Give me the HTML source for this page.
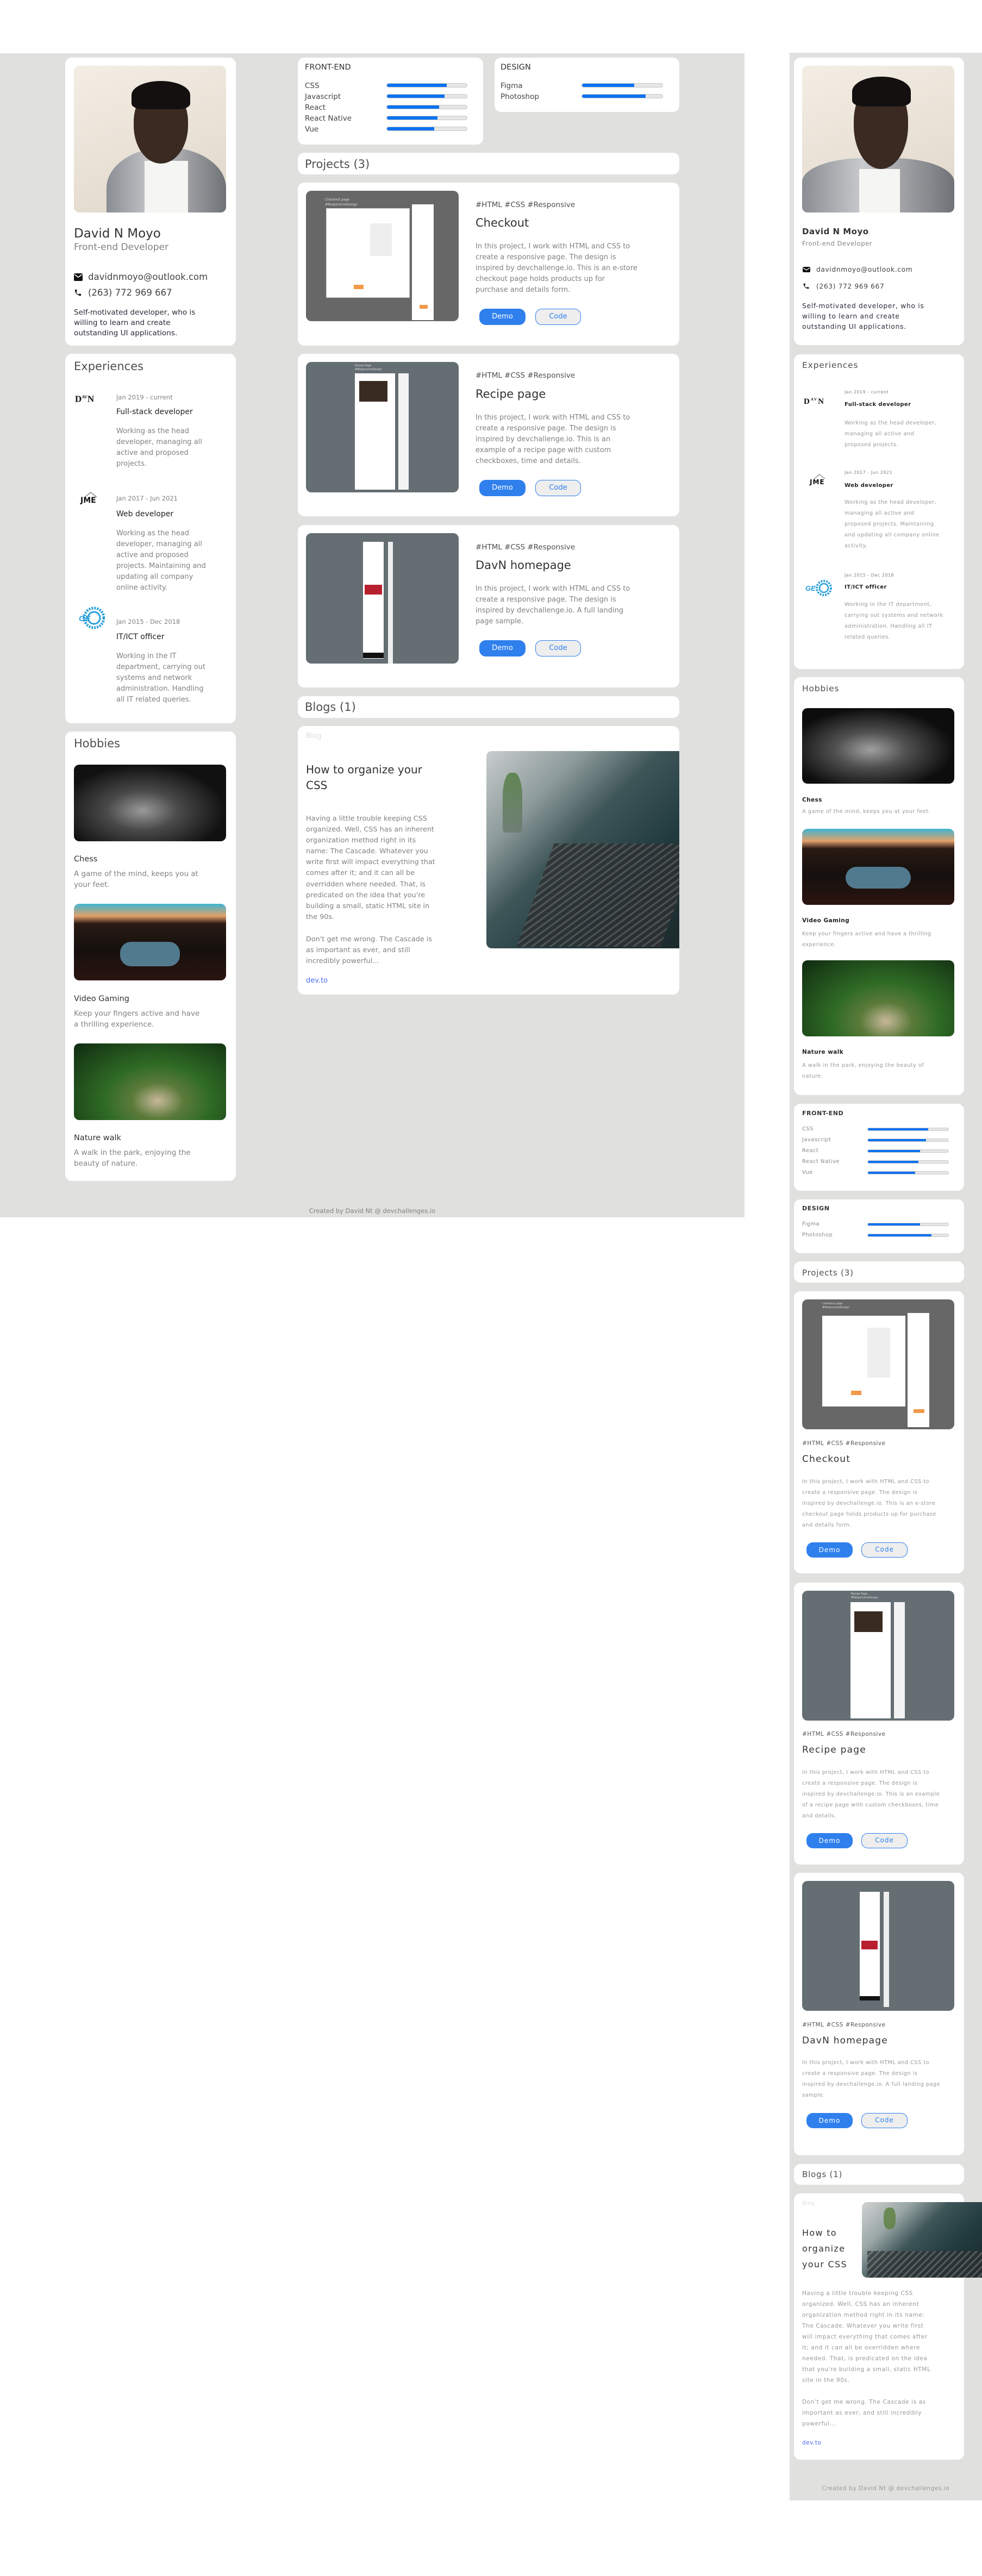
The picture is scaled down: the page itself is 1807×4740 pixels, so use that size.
<!DOCTYPE html>
<html><head><meta charset="utf-8"><style>
*{margin:0;padding:0;box-sizing:border-box}
body{width:1807px;height:4740px;position:relative;background:#fff;font-family:"DejaVu Sans","Liberation Sans",sans-serif;color:#333;overflow:hidden}
.a{position:absolute;white-space:nowrap}
.bg{position:absolute;background:#e0e0df}
.c{position:absolute;background:#fff;border-radius:12px}
.g{color:#828282}
.bar{position:absolute;background:#e6e6e6;border:1px solid #c9c9c9;border-radius:6px;overflow:hidden}
.bar i{display:block;height:100%;background:#0b72f0;border-radius:6px 0 0 6px}
.demo{position:absolute;background:#2f80ed;color:#fff;border-radius:12px;text-align:center}
.code{position:absolute;background:#eee;color:#2f80ed;border:1.5px solid #2f80ed;border-radius:12px;text-align:center}
.img{position:absolute;border-radius:10px;overflow:hidden}
</style></head><body>

<!-- ================= DESKTOP ================= -->
<div class="bg" style="left:0;top:98px;width:1370px;height:2142px"></div>

<!-- profile card -->
<div class="c" style="left:120px;top:106px;width:314px;height:530px"></div>
<div class="img" style="left:136px;top:121px;width:280px;height:270px;background:linear-gradient(160deg,#f3ede4 0%,#e8e0d4 60%,#ddd5c8 100%)">
  <div style="position:absolute;left:60px;top:150px;width:220px;height:150px;border-radius:50% 50% 0 0;background:linear-gradient(90deg,#8a8d92,#c8cacd 40%,#9a9ca0 70%,#6f7276)"></div>
  <div style="position:absolute;left:130px;top:175px;width:80px;height:100px;background:#f5f5f3"></div>
  <div style="position:absolute;left:110px;top:40px;width:100px;height:140px;border-radius:45% 45% 50% 50%;background:#3a2a22"></div>
  <div style="position:absolute;left:106px;top:28px;width:108px;height:52px;border-radius:50% 50% 20% 20%;background:#141010"></div>
</div>
<div class="a" style="left:136px;top:416px;font-size:23px;line-height:28px;color:#333">David N Moyo</div>
<div class="a g" style="left:136px;top:444px;font-size:17px;line-height:22px">Front-end Developer</div>
<svg class="a" style="left:136px;top:503px" width="16" height="14" viewBox="0 0 16 14"><rect x="0" y="0" width="16" height="14" rx="2" fill="#111"/><path d="M1 2 L8 7 L15 2" stroke="#fff" stroke-width="1.6" fill="none"/></svg>
<div class="a" style="left:162px;top:499px;font-size:16.5px;line-height:22px;color:#444">davidnmoyo@outlook.com</div>
<svg class="a" style="left:136px;top:531px" width="15" height="15" viewBox="0 0 24 24"><path d="M6.6 10.8c1.4 2.8 3.8 5.1 6.6 6.6l2.2-2.2c.3-.3.7-.4 1-.2 1.1.4 2.3.6 3.6.6.6 0 1 .4 1 1V20c0 .6-.4 1-1 1C10.6 21 3 13.4 3 4c0-.6.4-1 1-1h3.5c.6 0 1 .4 1 1 0 1.3.2 2.5.6 3.6.1.3 0 .7-.2 1L6.6 10.8z" fill="#111"/></svg>
<div class="a" style="left:162px;top:528px;font-size:16.5px;line-height:22px;color:#444">(263) 772 969 667</div>
<div class="a" style="left:136px;top:566px;font-size:13.6px;line-height:19px;color:#2b2b3a">Self-motivated developer, who is<br>willing to learn and create<br>outstanding UI applications.</div>

<!-- experiences -->
<div class="c" style="left:120px;top:651px;width:314px;height:680px"></div>
<div class="a" style="left:136px;top:661px;font-size:21px;line-height:26px;color:#4f4f4f">Experiences</div>
<div class="a" style="left:138px;top:722px;font-family:'Liberation Serif',serif;font-weight:bold;font-size:17px;line-height:18px;color:#111">D<sup style="font-size:8px">AV</sup>N</div>
<div class="a" style="left:214px;top:722px;font-size:11.5px;line-height:18px" class="g"><span style="color:#828282">Jan 2019 - current</span></div>
<div class="a" style="left:214px;top:749px;font-size:14px;line-height:18px;color:#222">Full-stack developer</div>
<div class="a" style="left:214px;top:784px;font-size:13px;line-height:20px;color:#828282">Working as the head<br>developer, managing all<br>active and proposed<br>projects.</div>

<div class="a" style="left:148px;top:904px;width:38px;height:30px">
  <svg width="38" height="12" viewBox="0 0 38 12" style="position:absolute;left:0;top:0"><path d="M8 11 L19 2 L30 11" stroke="#888" stroke-width="1.5" fill="none"/></svg>
  <div style="position:absolute;left:0;top:9px;font-weight:bold;font-size:14px;line-height:16px;color:#111">JME</div>
</div>
<div class="a" style="left:214px;top:908px;font-size:11.5px;line-height:18px;color:#828282">Jan 2017 - Jun 2021</div>
<div class="a" style="left:214px;top:937px;font-size:14px;line-height:18px;color:#222">Web developer</div>
<div class="a" style="left:214px;top:972px;font-size:13px;line-height:20px;color:#828282">Working as the head<br>developer, managing all<br>active and proposed<br>projects. Maintaining and<br>updating all company<br>online activity.</div>

<svg class="a" style="left:143px;top:1114px" width="50" height="46" viewBox="0 0 50 46"><circle cx="30" cy="23" r="18" fill="none" stroke="#2a9fd8" stroke-width="5" stroke-dasharray="3 2"/><circle cx="30" cy="23" r="11" fill="none" stroke="#2a9fd8" stroke-width="3"/><text x="2" y="29" font-family="Liberation Sans" font-weight="bold" font-style="italic" font-size="15" fill="#2a9fd8">GE</text></svg>
<div class="a" style="left:214px;top:1135px;font-size:11.5px;line-height:18px;color:#828282">Jan 2015 - Dec 2018</div>
<div class="a" style="left:214px;top:1163px;font-size:14px;line-height:18px;color:#222">IT/ICT officer</div>
<div class="a" style="left:214px;top:1198px;font-size:13px;line-height:20px;color:#828282">Working in the IT<br>department, carrying out<br>systems and network<br>administration. Handling<br>all IT related queries.</div>

<!-- hobbies -->
<div class="c" style="left:120px;top:1346px;width:314px;height:827px"></div>
<div class="a" style="left:136px;top:1355px;font-size:21px;line-height:26px;color:#4f4f4f">Hobbies</div>
<div class="img" style="left:136px;top:1407px;width:280px;height:141px;background:radial-gradient(ellipse at 45% 60%,#9a9a9a 0%,#4a4a4a 30%,#111 70%)"></div>
<div class="a" style="left:136px;top:1571px;font-size:14.5px;line-height:20px;color:#333">Chess</div>
<div class="a" style="left:136px;top:1598px;font-size:13.5px;line-height:20px;color:#828282">A game of the mind, keeps you at<br>your feet.</div>
<div class="img" style="left:136px;top:1663px;width:280px;height:141px;background:linear-gradient(180deg,#3fb6d2 0%,#e2a06a 16%,#2a1a14 26%,#15100e 60%,#2b1410 100%)"><div style="position:absolute;left:85px;top:70px;width:110px;height:45px;border-radius:20px;background:#6aa6c4;opacity:.7"></div></div>
<div class="a" style="left:136px;top:1828px;font-size:14.5px;line-height:20px;color:#333">Video Gaming</div>
<div class="a" style="left:136px;top:1855px;font-size:13.5px;line-height:20px;color:#828282">Keep your fingers active and have<br>a thrilling experience.</div>
<div class="img" style="left:136px;top:1920px;width:280px;height:141px;background:radial-gradient(ellipse at 55% 75%,#c8b89a 0%,#5b7a3a 22%,#2f6b25 45%,#0f2a10 100%)"></div>
<div class="a" style="left:136px;top:2084px;font-size:14.5px;line-height:20px;color:#333">Nature walk</div>
<div class="a" style="left:136px;top:2111px;font-size:13.5px;line-height:20px;color:#828282">A walk in the park, enjoying the<br>beauty of nature.</div>

<!-- skills -->
<div class="c" style="left:548px;top:106px;width:341px;height:160px"></div>
<div class="a" style="left:561px;top:115px;font-size:14.5px;line-height:18px;color:#333">FRONT-END</div>
<div class="a" style="left:561px;top:148px;font-size:13.5px;line-height:20px;color:#444">CSS<br>Javascript<br>React<br>React Native<br>Vue</div>
<div class="bar" style="left:711px;top:153px;width:149px;height:8px"><i style="width:75%"></i></div>
<div class="bar" style="left:711px;top:173px;width:149px;height:8px"><i style="width:72%"></i></div>
<div class="bar" style="left:711px;top:193px;width:149px;height:8px"><i style="width:65%"></i></div>
<div class="bar" style="left:711px;top:213px;width:149px;height:8px"><i style="width:63%"></i></div>
<div class="bar" style="left:711px;top:233px;width:149px;height:8px"><i style="width:59%"></i></div>

<div class="c" style="left:910px;top:106px;width:340px;height:100px"></div>
<div class="a" style="left:921px;top:115px;font-size:14.5px;line-height:18px;color:#333">DESIGN</div>
<div class="a" style="left:921px;top:148px;font-size:13.5px;line-height:20px;color:#444">Figma<br>Photoshop</div>
<div class="bar" style="left:1070px;top:153px;width:150px;height:8px"><i style="width:65%"></i></div>
<div class="bar" style="left:1070px;top:173px;width:150px;height:8px"><i style="width:79%"></i></div>

<!-- projects header -->
<div class="c" style="left:548px;top:281px;width:702px;height:40px"></div>
<div class="a" style="left:561px;top:288px;font-size:21px;line-height:28px;color:#4f4f4f">Projects (3)</div>

<!-- project 1 -->
<div class="c" style="left:548px;top:336px;width:702px;height:300px"></div>
<div class="img" style="left:563px;top:351px;width:281px;height:240px;background:#676767">
  <div style="position:absolute;left:35px;top:12px;font-size:6px;line-height:9px;color:#ddd">Checkout page<br>#ResponsiveDesign</div>
  <div style="position:absolute;left:37px;top:32px;width:154px;height:165px;background:#fff;border:1px solid #ccc"></div>
  <div style="position:absolute;left:118px;top:60px;width:40px;height:60px;background:#eee"></div>
  <div style="position:absolute;left:88px;top:173px;width:18px;height:8px;background:#f2994a"></div>
  <div style="position:absolute;left:195px;top:25px;width:40px;height:213px;background:#fff"></div>
  <div style="position:absolute;left:209px;top:210px;width:15px;height:7px;background:#f2994a"></div>
</div>
<div class="a" style="left:875px;top:367px;font-size:13.5px;line-height:20px;color:#4f4f4f">#HTML #CSS #Responsive</div>
<div class="a" style="left:875px;top:396px;font-size:21px;line-height:28px;color:#333">Checkout</div>
<div class="a" style="left:875px;top:444px;font-size:13px;line-height:20px;color:#828282">In this project, I work with HTML and CSS to<br>create a responsive page. The design is<br>inspired by devchallenge.io. This is an e-store<br>checkout page holds products up for<br>purchase and details form.</div>
<div class="demo" style="left:882px;top:568px;width:85px;height:30px;font-size:13px;line-height:30px">Demo</div>
<div class="code" style="left:985px;top:568px;width:84px;height:30px;font-size:13px;line-height:27px">Code</div>

<!-- project 2 -->
<div class="c" style="left:548px;top:651px;width:702px;height:299px"></div>
<div class="img" style="left:563px;top:666px;width:281px;height:240px;background:#646e73">
  <div style="position:absolute;left:90px;top:4px;font-size:5px;line-height:7px;color:#ddd">Recipe Page<br>#ResponsiveDesign</div>
  <div style="position:absolute;left:90px;top:21px;width:74px;height:214px;background:#fff"></div>
  <div style="position:absolute;left:98px;top:35px;width:52px;height:38px;background:#3a2b22"></div>
  <div style="position:absolute;left:170px;top:21px;width:19px;height:214px;background:#f3f3f3"></div>
</div>
<div class="a" style="left:875px;top:681px;font-size:13.5px;line-height:20px;color:#4f4f4f">#HTML #CSS #Responsive</div>
<div class="a" style="left:875px;top:711px;font-size:21px;line-height:28px;color:#333">Recipe page</div>
<div class="a" style="left:875px;top:759px;font-size:13px;line-height:20px;color:#828282">In this project, I work with HTML and CSS to<br>create a responsive page. The design is<br>inspired by devchallenge.io. This is an<br>example of a recipe page with custom<br>checkboxes, time and details.</div>
<div class="demo" style="left:882px;top:883px;width:85px;height:30px;font-size:13px;line-height:30px">Demo</div>
<div class="code" style="left:985px;top:883px;width:84px;height:30px;font-size:13px;line-height:27px">Code</div>

<!-- project 3 -->
<div class="c" style="left:548px;top:966px;width:702px;height:299px"></div>
<div class="img" style="left:563px;top:981px;width:281px;height:240px;background:#646e73">
  <div style="position:absolute;left:105px;top:16px;width:38px;height:215px;background:#fff"></div>
  <div style="position:absolute;left:108px;top:95px;width:32px;height:18px;background:#b8202f"></div>
  <div style="position:absolute;left:151px;top:16px;width:9px;height:230px;background:#eee"></div>
  <div style="position:absolute;left:105px;top:220px;width:38px;height:10px;background:#111"></div>
</div>
<div class="a" style="left:875px;top:997px;font-size:13.5px;line-height:20px;color:#4f4f4f">#HTML #CSS #Responsive</div>
<div class="a" style="left:875px;top:1026px;font-size:21px;line-height:28px;color:#333">DavN homepage</div>
<div class="a" style="left:875px;top:1074px;font-size:13px;line-height:20px;color:#828282">In this project, I work with HTML and CSS to<br>create a responsive page. The design is<br>inspired by devchallenge.io. A full landing<br>page sample.</div>
<div class="demo" style="left:882px;top:1178px;width:85px;height:30px;font-size:13px;line-height:30px">Demo</div>
<div class="code" style="left:985px;top:1178px;width:84px;height:30px;font-size:13px;line-height:27px">Code</div>

<!-- blogs -->
<div class="c" style="left:548px;top:1281px;width:702px;height:40px"></div>
<div class="a" style="left:561px;top:1287px;font-size:21px;line-height:28px;color:#4f4f4f">Blogs (1)</div>
<div class="c" style="left:548px;top:1336px;width:702px;height:494px;overflow:hidden">
  <div style="position:absolute;left:347px;top:46px;width:355px;height:363px;border-radius:10px 0 0 10px;background:linear-gradient(135deg,#c9cdcd 0%,#8c9a9b 25%,#3e5558 45%,#203a3e 70%,#1c2a2c 100%)">
    <div style="position:absolute;left:30px;top:40px;width:36px;height:110px;background:linear-gradient(#4f7a3c,#6a7a6e);border-radius:40% 40% 10% 10%;opacity:.8"></div>
    <div style="position:absolute;left:90px;top:170px;width:265px;height:190px;background:repeating-linear-gradient(135deg,#2d2f30 0 8px,#55595b 8px 12px);opacity:.8;transform:skewX(-20deg)"></div>
  </div>
</div>
<div class="a" style="left:563px;top:1346px;font-size:13px;line-height:18px;color:#dcdcdc">Blog</div>
<div class="a" style="left:563px;top:1402px;font-size:20px;line-height:29px;color:#333">How to organize your<br>CSS</div>
<div class="a" style="left:563px;top:1497px;font-size:12.8px;line-height:20.1px;color:#828282">Having a little trouble keeping CSS<br>organized. Well, CSS has an inherent<br>organization method right in its<br>name: The Cascade. Whatever you<br>write first will impact everything that<br>comes after it; and it can all be<br>overridden where needed. That, is<br>predicated on the idea that you're<br>building a small, static HTML site in<br>the 90s.</div>
<div class="a" style="left:563px;top:1719px;font-size:12.8px;line-height:20px;color:#828282">Don't get me wrong. The Cascade is<br>as important as ever, and still<br>incredibly powerful...</div>
<div class="a" style="left:563px;top:1795px;font-size:13px;line-height:20px;color:#4b6bf0">dev.to</div>

<div class="a" style="left:545px;top:2219px;width:280px;text-align:center;font-size:11.5px;line-height:18px;color:#828282">Created by David Nt @ devchallenges.io</div>

<!-- ================= MOBILE ================= -->
<div class="bg" style="left:1453px;top:97px;width:354px;height:4504px"></div>

<div class="c" style="left:1461px;top:106px;width:313px;height:529px"></div>
<div class="img" style="left:1476px;top:121px;width:280px;height:270px;background:linear-gradient(160deg,#f3ede4 0%,#e8e0d4 60%,#ddd5c8 100%)">
  <div style="position:absolute;left:0;top:170px;width:280px;height:110px;border-radius:40% 40% 0 0;background:linear-gradient(90deg,#8a8d92,#c8cacd 40%,#9a9ca0 70%,#6f7276)"></div>
  <div style="position:absolute;left:105px;top:190px;width:75px;height:80px;background:#f5f5f3"></div>
  <div style="position:absolute;left:95px;top:30px;width:100px;height:160px;border-radius:45% 45% 50% 50%;background:#3a2a22"></div>
  <div style="position:absolute;left:92px;top:20px;width:108px;height:55px;border-radius:50% 50% 20% 20%;background:#141010"></div>
</div>
<div class="a" style="left:1476px;top:416px;font-size:15px;line-height:20px;color:#333;font-weight:bold;letter-spacing:.5px">David N Moyo</div>
<div class="a" style="left:1476px;top:440px;font-size:11.5px;line-height:16px;color:#828282;letter-spacing:.6px">Front-end Developer</div>
<svg class="a" style="left:1477px;top:491px" width="14" height="10" viewBox="0 0 14 10"><rect width="14" height="10" rx="2" fill="#111"/><path d="M1 2 L7 6 L13 2" stroke="#fff" stroke-width="1.3" fill="none"/></svg>
<div class="a" style="left:1502px;top:488px;font-size:12.3px;line-height:16px;color:#444;letter-spacing:.6px">davidnmoyo@outlook.com</div>
<svg class="a" style="left:1477px;top:520px" width="13" height="13" viewBox="0 0 24 24"><path d="M6.6 10.8c1.4 2.8 3.8 5.1 6.6 6.6l2.2-2.2c.3-.3.7-.4 1-.2 1.1.4 2.3.6 3.6.6.6 0 1 .4 1 1V20c0 .6-.4 1-1 1C10.6 21 3 13.4 3 4c0-.6.4-1 1-1h3.5c.6 0 1 .4 1 1 0 1.3.2 2.5.6 3.6.1.3 0 .7-.2 1L6.6 10.8z" fill="#111"/></svg>
<div class="a" style="left:1502px;top:519px;font-size:12.3px;line-height:16px;color:#444;letter-spacing:.6px">(263) 772 969 667</div>
<div class="a" style="left:1476px;top:554px;font-size:12.3px;line-height:19px;color:#2b2b3a;letter-spacing:.7px">Self-motivated developer, who is<br>willing to learn and create<br>outstanding UI applications.</div>

<div class="c" style="left:1461px;top:652px;width:313px;height:579px"></div>
<div class="a" style="left:1476px;top:661px;font-size:15.5px;line-height:22px;color:#4f4f4f;letter-spacing:.8px">Experiences</div>
<div class="a" style="left:1479px;top:727px;font-family:'Liberation Serif',serif;font-weight:bold;font-size:15px;line-height:16px;color:#111;letter-spacing:2px">D<sup style="font-size:7px">AV</sup>N</div>
<div class="a" style="left:1554px;top:716px;font-size:8px;line-height:12px;color:#828282;letter-spacing:.5px">Jan 2019 - current</div>
<div class="a" style="left:1554px;top:738px;font-size:10px;line-height:14px;color:#222;font-weight:bold;letter-spacing:.4px">Full-stack developer</div>
<div class="a" style="left:1554px;top:769px;font-size:9.7px;line-height:20px;color:#999;letter-spacing:.5px">Working as the head developer,<br>managing all active and<br>proposed projects.</div>
<div class="a" style="left:1490px;top:872px;width:36px;height:28px">
  <svg width="36" height="10" viewBox="0 0 36 10" style="position:absolute;left:0;top:0"><path d="M8 9 L18 1 L28 9" stroke="#888" stroke-width="1.3" fill="none"/></svg>
  <div style="position:absolute;left:0;top:8px;font-weight:bold;font-size:12px;line-height:14px;color:#111;letter-spacing:1px">JME</div>
</div>
<div class="a" style="left:1554px;top:864px;font-size:8px;line-height:12px;color:#828282;letter-spacing:.5px">Jan 2017 - Jun 2021</div>
<div class="a" style="left:1554px;top:887px;font-size:10px;line-height:14px;color:#222;font-weight:bold;letter-spacing:.4px">Web developer</div>
<div class="a" style="left:1554px;top:915px;font-size:9.7px;line-height:20px;color:#999;letter-spacing:.5px">Working as the head developer,<br>managing all active and<br>proposed projects. Maintaining<br>and updating all company online<br>activity.</div>
<svg class="a" style="left:1482px;top:1067px" width="52" height="30" viewBox="0 0 52 30"><circle cx="34" cy="15" r="13" fill="none" stroke="#2a9fd8" stroke-width="4" stroke-dasharray="3 2"/><circle cx="34" cy="15" r="8" fill="none" stroke="#2a9fd8" stroke-width="2.5"/><text x="0" y="20" font-family="Liberation Sans" font-weight="bold" font-style="italic" font-size="13" fill="#2a9fd8">GE</text></svg>
<div class="a" style="left:1554px;top:1053px;font-size:8px;line-height:12px;color:#828282;letter-spacing:.5px">Jan 2015 - Dec 2018</div>
<div class="a" style="left:1554px;top:1074px;font-size:10px;line-height:14px;color:#222;font-weight:bold;letter-spacing:.4px">IT/ICT officer</div>
<div class="a" style="left:1554px;top:1103px;font-size:9.7px;line-height:20px;color:#999;letter-spacing:.5px">Working in the IT department,<br>carrying out systems and network<br>administration. Handling all IT<br>related queries.</div>

<div class="c" style="left:1461px;top:1246px;width:313px;height:769px"></div>
<div class="a" style="left:1476px;top:1256px;font-size:15.5px;line-height:22px;color:#4f4f4f;letter-spacing:.8px">Hobbies</div>
<div class="img" style="left:1476px;top:1303px;width:280px;height:139px;background:radial-gradient(ellipse at 45% 55%,#a0a0a0 0%,#505050 30%,#0d0d0d 70%)"></div>
<div class="a" style="left:1476px;top:1464px;font-size:10.5px;line-height:16px;color:#222;font-weight:bold;letter-spacing:.4px">Chess</div>
<div class="a" style="left:1476px;top:1487px;font-size:9.7px;line-height:14px;color:#999;letter-spacing:.5px">A game of the mind, keeps you at your feet.</div>
<div class="img" style="left:1476px;top:1525px;width:280px;height:140px;background:linear-gradient(180deg,#3fb6d2 0%,#e2a06a 16%,#2a1a14 26%,#15100e 60%,#2b1410 100%)"><div style="position:absolute;left:80px;top:70px;width:120px;height:40px;border-radius:20px;background:#6aa6c4;opacity:.7"></div></div>
<div class="a" style="left:1476px;top:1686px;font-size:10.5px;line-height:16px;color:#222;font-weight:bold;letter-spacing:.4px">Video Gaming</div>
<div class="a" style="left:1476px;top:1709px;font-size:9.7px;line-height:20px;color:#999;letter-spacing:.5px">Keep your fingers active and have a thrilling<br>experience.</div>
<div class="img" style="left:1476px;top:1767px;width:280px;height:140px;background:radial-gradient(ellipse at 55% 80%,#c8b89a 0%,#5b7a3a 22%,#2f6b25 45%,#0f2a10 100%)"></div>
<div class="a" style="left:1476px;top:1928px;font-size:10.5px;line-height:16px;color:#222;font-weight:bold;letter-spacing:.4px">Nature walk</div>
<div class="a" style="left:1476px;top:1951px;font-size:9.7px;line-height:20px;color:#999;letter-spacing:.5px">A walk in the park, enjoying the beauty of<br>nature.</div>

<div class="c" style="left:1461px;top:2031px;width:313px;height:160px"></div>
<div class="a" style="left:1476px;top:2041px;font-size:11px;line-height:16px;color:#333;font-weight:bold;letter-spacing:.6px">FRONT-END</div>
<div class="a" style="left:1476px;top:2068px;font-size:9.7px;line-height:20px;color:#888;letter-spacing:.6px">CSS<br>Javascript<br>React<br>React Native<br>Vue</div>
<div class="bar" style="left:1596px;top:2075px;width:150px;height:6px"><i style="width:75%"></i></div>
<div class="bar" style="left:1596px;top:2095px;width:150px;height:6px"><i style="width:72%"></i></div>
<div class="bar" style="left:1596px;top:2115px;width:150px;height:6px"><i style="width:65%"></i></div>
<div class="bar" style="left:1596px;top:2135px;width:150px;height:6px"><i style="width:63%"></i></div>
<div class="bar" style="left:1596px;top:2155px;width:150px;height:6px"><i style="width:59%"></i></div>

<div class="c" style="left:1461px;top:2207px;width:313px;height:99px"></div>
<div class="a" style="left:1476px;top:2216px;font-size:11px;line-height:16px;color:#333;font-weight:bold;letter-spacing:.6px">DESIGN</div>
<div class="a" style="left:1476px;top:2243px;font-size:9.7px;line-height:20px;color:#888;letter-spacing:.6px">Figma<br>Photoshop</div>
<div class="bar" style="left:1596px;top:2250px;width:150px;height:6px"><i style="width:65%"></i></div>
<div class="bar" style="left:1596px;top:2270px;width:150px;height:6px"><i style="width:79%"></i></div>

<div class="c" style="left:1461px;top:2321px;width:313px;height:39px"></div>
<div class="a" style="left:1476px;top:2331px;font-size:15px;line-height:22px;color:#4f4f4f;letter-spacing:.8px">Projects (3)</div>

<!-- m project 1 -->
<div class="c" style="left:1461px;top:2376px;width:313px;height:519px"></div>
<div class="img" style="left:1476px;top:2391px;width:280px;height:239px;background:#676767">
  <div style="position:absolute;left:37px;top:5px;font-size:5px;line-height:7px;color:#ddd">Checkout page<br>#ResponsiveDesign</div>
  <div style="position:absolute;left:37px;top:30px;width:153px;height:167px;background:#fff"></div>
  <div style="position:absolute;left:120px;top:52px;width:42px;height:92px;background:#eee"></div>
  <div style="position:absolute;left:90px;top:168px;width:19px;height:8px;background:#f2994a"></div>
  <div style="position:absolute;left:194px;top:25px;width:40px;height:210px;background:#fff"></div>
  <div style="position:absolute;left:205px;top:202px;width:20px;height:7px;background:#f2994a"></div>
</div>
<div class="a" style="left:1476px;top:2649px;font-size:10.5px;line-height:14px;color:#555;letter-spacing:.5px">#HTML #CSS #Responsive</div>
<div class="a" style="left:1476px;top:2674px;font-size:17px;line-height:22px;color:#333;letter-spacing:1.2px">Checkout</div>
<div class="a" style="left:1476px;top:2717px;font-size:9.7px;line-height:20px;color:#999;letter-spacing:.5px">In this project, I work with HTML and CSS to<br>create a responsive page. The design is<br>inspired by devchallenge.io. This is an e-store<br>checkout page holds products up for purchase<br>and details form.</div>
<div class="demo" style="left:1484px;top:2838px;width:85px;height:28px;font-size:12px;line-height:28px;letter-spacing:1px">Demo</div>
<div class="code" style="left:1585px;top:2838px;width:85px;height:28px;font-size:12px;line-height:25px;letter-spacing:1px">Code</div>

<!-- m project 2 -->
<div class="c" style="left:1461px;top:2912px;width:313px;height:519px"></div>
<div class="img" style="left:1476px;top:2927px;width:280px;height:239px;background:#646e73">
  <div style="position:absolute;left:90px;top:3px;font-size:5px;line-height:7px;color:#ddd">Recipe Page<br>#ResponsiveDesign</div>
  <div style="position:absolute;left:89px;top:21px;width:74px;height:214px;background:#fff"></div>
  <div style="position:absolute;left:96px;top:38px;width:52px;height:38px;background:#3a2b22"></div>
  <div style="position:absolute;left:169px;top:21px;width:20px;height:214px;background:#f3f3f3"></div>
</div>
<div class="a" style="left:1476px;top:3184px;font-size:10.5px;line-height:14px;color:#555;letter-spacing:.5px">#HTML #CSS #Responsive</div>
<div class="a" style="left:1476px;top:3209px;font-size:17px;line-height:22px;color:#333;letter-spacing:1.2px">Recipe page</div>
<div class="a" style="left:1476px;top:3252px;font-size:9.7px;line-height:20px;color:#999;letter-spacing:.5px">In this project, I work with HTML and CSS to<br>create a responsive page. The design is<br>inspired by devchallenge.io. This is an example<br>of a recipe page with custom checkboxes, time<br>and details.</div>
<div class="demo" style="left:1484px;top:3373px;width:85px;height:28px;font-size:12px;line-height:28px;letter-spacing:1px">Demo</div>
<div class="code" style="left:1585px;top:3373px;width:85px;height:28px;font-size:12px;line-height:25px;letter-spacing:1px">Code</div>

<!-- m project 3 -->
<div class="c" style="left:1461px;top:3446px;width:313px;height:520px"></div>
<div class="img" style="left:1476px;top:3461px;width:280px;height:239px;background:#646e73">
  <div style="position:absolute;left:106px;top:20px;width:37px;height:200px;background:#fff"></div>
  <div style="position:absolute;left:109px;top:110px;width:30px;height:16px;background:#b8202f"></div>
  <div style="position:absolute;left:150px;top:20px;width:10px;height:212px;background:#eee"></div>
  <div style="position:absolute;left:106px;top:212px;width:37px;height:8px;background:#111"></div>
</div>
<div class="a" style="left:1476px;top:3719px;font-size:10.5px;line-height:14px;color:#555;letter-spacing:.5px">#HTML #CSS #Responsive</div>
<div class="a" style="left:1476px;top:3744px;font-size:17px;line-height:22px;color:#333;letter-spacing:1.2px">DavN homepage</div>
<div class="a" style="left:1476px;top:3786px;font-size:9.7px;line-height:20px;color:#999;letter-spacing:.5px">In this project, I work with HTML and CSS to<br>create a responsive page. The design is<br>inspired by devchallenge.io. A full landing page<br>sample.</div>
<div class="demo" style="left:1484px;top:3888px;width:85px;height:28px;font-size:12px;line-height:28px;letter-spacing:1px">Demo</div>
<div class="code" style="left:1585px;top:3888px;width:85px;height:28px;font-size:12px;line-height:25px;letter-spacing:1px">Code</div>

<div class="c" style="left:1461px;top:3982px;width:313px;height:38px"></div>
<div class="a" style="left:1476px;top:3990px;font-size:15px;line-height:22px;color:#4f4f4f;letter-spacing:.8px">Blogs (1)</div>

<div class="c" style="left:1461px;top:4036px;width:313px;height:490px"></div>
<div style="position:absolute;left:1586px;top:4052px;width:221px;height:139px;border-radius:10px 0 0 10px;background:linear-gradient(135deg,#d0d3d2 0%,#9aa6a6 25%,#3e5558 45%,#203a3e 70%,#1c2a2c 100%);overflow:hidden">
  <div style="position:absolute;left:40px;top:10px;width:22px;height:40px;background:#5b7f3e;border-radius:40%;opacity:.8"></div>
  <div style="position:absolute;left:10px;top:90px;width:211px;height:49px;background:repeating-linear-gradient(135deg,#2d2f30 0 6px,#6a6e70 6px 9px);opacity:.7"></div>
</div>
<div class="a" style="left:1476px;top:4048px;font-size:9.7px;line-height:14px;color:#ddd;letter-spacing:.5px">Blog</div>
<div class="a" style="left:1476px;top:4094px;font-size:16px;line-height:29px;color:#333;letter-spacing:1.3px">How to<br>organize<br>your CSS</div>
<div class="a" style="left:1476px;top:4210px;font-size:10.5px;line-height:20px;color:#999;letter-spacing:.6px">Having a little trouble keeping CSS<br>organized. Well, CSS has an inherent<br>organization method right in its name:<br>The Cascade. Whatever you write first<br>will impact everything that comes after<br>it; and it can all be overridden where<br>needed. That, is predicated on the idea<br>that you're building a small, static HTML<br>site in the 90s.</div>
<div class="a" style="left:1476px;top:4410px;font-size:10.5px;line-height:20px;color:#999;letter-spacing:.6px">Don't get me wrong. The Cascade is as<br>important as ever, and still incredibly<br>powerful...</div>
<div class="a" style="left:1476px;top:4486px;font-size:10.5px;line-height:18px;color:#4b6bf0;letter-spacing:.5px">dev.to</div>

<div class="a" style="left:1480px;top:4570px;width:300px;text-align:center;font-size:10.5px;line-height:18px;color:#999;letter-spacing:.6px">Created by David Nt @ devchallenges.io</div>

</body></html>
